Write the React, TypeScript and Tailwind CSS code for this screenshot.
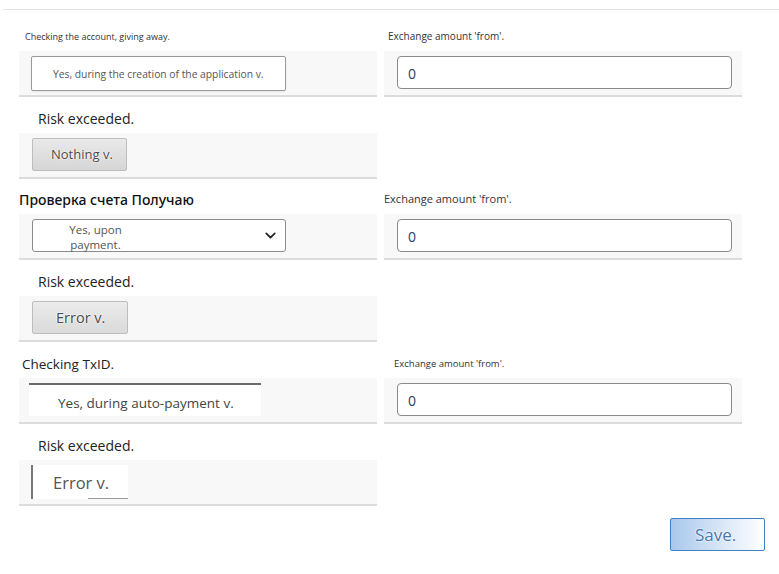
import { ChevronDown } from 'lucide-react'

const font = { fontFamily: '"Open Sans", "Noto Sans", sans-serif' }

function Band({ children }: { children?: React.ReactNode }) {
  return (
    <div className="h-[46px] bg-[#f8f8f8] border-b-2 border-[#dcdcdc] pt-[5px]">
      {children}
    </div>
  )
}

function AmountField({ label, labelClass }: { label: string; labelClass: string }) {
  return (
    <div className="flex flex-col">
      <div className={`flex items-center ${labelClass}`}>{label}</div>
      <Band>
        <div className="ml-[13px] w-[335px] h-[33px] bg-white border border-[#8a8a8a] rounded-[4px] flex items-center pl-[10px] pt-[1px] text-[14px] text-[#2b3d63]">
          0
        </div>
      </Band>
    </div>
  )
}

export default function App() {
  return (
    <div className="w-[779px] h-[574px] bg-white relative" style={font}>
      <div className="pt-[9px]">
        <div className="border-t border-[#e4e4e4] ml-[3px]" />
      </div>

      <div className="pl-[19px] flex flex-col">
        {/* section 1 */}
        <div className="grid grid-cols-[358px_358px] gap-x-[7px]">
          <div className="flex flex-col">
            <div className="h-[41px] flex items-center pl-[6px] pt-[13px] text-[9px] text-[#333]">
              Checking the account, giving away.
            </div>
            <Band>
              <div className="ml-[12px] w-[255px] h-[35px] bg-white border border-[#9a9a9a] rounded-[2px] shadow-[0_1px_2px_rgba(0,0,0,0.08)] flex items-center pl-[21px] pt-[3px] text-[10.3px] text-[#555]">
                Yes, during the creation of the application v.
              </div>
            </Band>
            <div className="h-[36px] flex items-center pl-[19px] pt-[6px] text-[14px] text-[#222]">
              Risk exceeded.
            </div>
            <Band>
              <div className="ml-[13px] w-[95px] h-[33px] bg-gradient-to-b from-[#e9e9e9] to-[#d6d6d6] border border-[#bdbdbd] rounded-[2px] flex items-center pl-[18px] text-[13px] text-[#4a4a4a] [text-shadow:0_0_2px_#fff,0_0_2px_#fff]">
                Nothing v.
              </div>
            </Band>
          </div>
          <AmountField
            label="Exchange amount 'from'."
            labelClass="h-[41px] pl-[4px] pt-[12px] text-[10px] text-[#333]"
          />
        </div>

        {/* section 2 */}
        <div className="grid grid-cols-[358px_358px] gap-x-[7px]">
          <div className="flex flex-col">
            <div className="h-[35px] flex items-center pt-[5px] text-[14px] font-medium text-[#111]" style={{ fontFamily: '"Noto Sans", "Open Sans", sans-serif' }}>
              Проверка счета Получаю
            </div>
            <Band>
              <div className="ml-[13px] w-[254px] h-[33px] bg-white border border-[#8c8c8c] rounded-[3px] flex items-center">
                <div className="flex-1 flex flex-col items-center leading-[15px] pt-[3px] text-[11.5px] text-[#555] pr-[104px]">
                  <span>Yes, upon</span>
                  <span>payment.</span>
                </div>
                <ChevronDown className="w-[17px] h-[17px] mr-[6px] text-[#222]" strokeWidth={2.4} />
              </div>
            </Band>
            <div className="h-[36px] flex items-center pl-[19px] pt-[7px] text-[14px] text-[#222]">
              Risk exceeded.
            </div>
            <Band>
              <div className="ml-[13px] w-[96px] h-[33px] bg-gradient-to-b from-[#ebebeb] to-[#dadada] border border-[#bdbdbd] rounded-[2px] flex items-center pl-[23px] text-[14.5px] text-[#4a4a4a] [text-shadow:0_0_2px_#fff,0_0_2px_#fff]">
                Error v.
              </div>
            </Band>
          </div>
          <AmountField
            label="Exchange amount 'from'."
            labelClass="h-[35px] pt-[5px] text-[11px] text-[#333]"
          />
        </div>

        {/* section 3 */}
        <div className="grid grid-cols-[358px_358px] gap-x-[7px]">
          <div className="flex flex-col">
            <div className="h-[36px] flex items-center pl-[3px] pt-[8px] text-[13.5px] text-[#222]">
              Checking TxID.
            </div>
            <Band>
              <div className="ml-[10px] w-[232px] h-[33px] bg-white border-t-2 border-[#6a6a6a] flex items-center pl-[29px] pt-[5px] text-[13.5px] text-[#444]">
                Yes, during auto-payment v.
              </div>
            </Band>
            <div className="h-[36px] flex items-center pl-[19px] pt-[6px] text-[14px] text-[#222]">
              Risk exceeded.
            </div>
            <Band>
              <div className="ml-[12px] w-[97px] h-[34px] bg-white border-l-2 border-[#777] flex items-center pl-[20px] pt-[3px] text-[16.5px] text-[#555] relative">
                Error v.
                <div className="absolute bottom-0 left-[55px] w-[40px] border-b border-[#999]" />
              </div>
            </Band>
          </div>
          <AmountField
            label="Exchange amount 'from'."
            labelClass="h-[36px] pl-[10px] pt-[8px] text-[9.5px] text-[#333]"
          />
        </div>

        <div className="flex justify-end pr-[14px] pt-[12px]">
          <button className="w-[95px] h-[33px] bg-gradient-to-r from-[#a9c7ec] via-[#d4e4f6] to-white border border-[#3f7fc4] rounded-[2px] flex items-center pl-[24px] text-[17px] text-[#4677b0] [text-shadow:0_0_2px_#fff,0_0_2px_#fff]">
            Save.
          </button>
        </div>
      </div>
    </div>
  )
}
